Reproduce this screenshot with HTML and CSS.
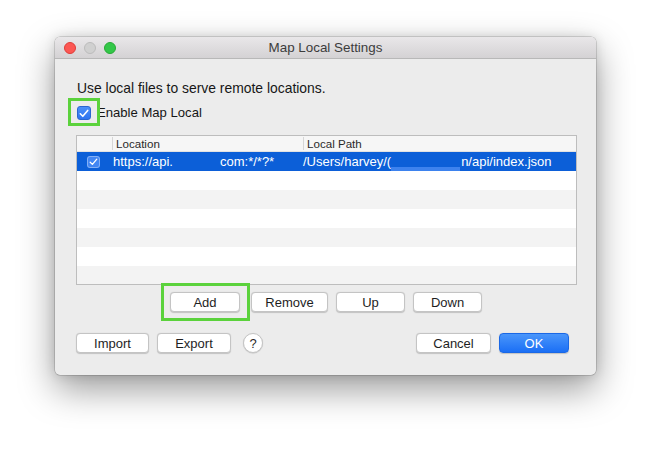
FILE: index.html
```
<!DOCTYPE html>
<html>
<head>
<meta charset="utf-8">
<link rel="stylesheet" href="styles.css">
</head>
<body>
<div class="window">
  <div class="titlebar">
    <div class="lights">
      <span class="light red"></span>
      <span class="light gray"></span>
      <span class="light green"></span>
    </div>
    <div class="title">Map Local Settings</div>
  </div>
  <div class="content">
    <div class="desc">Use local files to serve remote locations.</div>
    <div class="check-row">
      <span class="checkbox">
        <svg width="10" height="9" viewBox="0 0 10 9"><path d="M1.3 4.8 L3.8 7.3 L8.7 1.4" fill="none" stroke="#fff" stroke-width="1.6" stroke-linecap="round" stroke-linejoin="round"/></svg>
      </span>
      <span class="check-label">Enable Map Local</span>
    </div>
    <div class="table">
      <div class="thead">
        <div class="c1"></div>
        <div class="c2 th">Location</div>
        <div class="c3 th">Local Path</div>
      </div>
      <div class="tbody">
        <div class="row selected">
          <div class="c1"><span class="rowcheck"><svg width="9" height="8" viewBox="0 0 9 8"><path d="M1.2 4.2 L3.4 6.4 L7.8 1.2" fill="none" stroke="#fff" stroke-width="1.3" stroke-linecap="round" stroke-linejoin="round"/></svg></span></div>
          <div class="c2 td"><span>https://api.</span><span class="gap1"></span><span>com:*/*?*</span></div>
          <div class="c3 td"><span>/Users/harvey/(</span><span class="redact"></span><span>n/api/index.json</span></div>
        </div>
        <div class="row"></div>
        <div class="row alt"></div>
        <div class="row"></div>
        <div class="row alt"></div>
        <div class="row"></div>
        <div class="row alt"></div>
      </div>
    </div>
    <div class="btn-row">
      <button class="btn w-add">Add</button>
      <button class="btn w-remove">Remove</button>
      <button class="btn w-up">Up</button>
      <button class="btn w-down">Down</button>
    </div>
    <div class="bottom-row">
      <button class="btn w-import">Import</button>
      <button class="btn w-export">Export</button>
      <span class="help">?</span>
      <span class="spacer"></span>
      <button class="btn w-cancel">Cancel</button>
      <button class="btn primary w-ok">OK</button>
    </div>
  </div>
  <div class="hl hl-check"></div>
  <div class="hl hl-add"></div>
</div>
</body>
</html>
```
FILE: styles.css
```
* { box-sizing: border-box; }
html, body { margin: 0; padding: 0; background: #fff; }
body {
  width: 652px; height: 449px; overflow: hidden;
  font-family: "Liberation Sans", Arial, sans-serif;
  color: #161616;
}
.window {
  position: relative;
  margin: 37px 0 0 55px;
  width: 541px; height: 338px;
  background: #ececec;
  border-radius: 5px;
  box-shadow: 0 0 0 0.5px rgba(0,0,0,0.25), 0 14px 36px rgba(0,0,0,0.4), 0 0 12px rgba(0,0,0,0.12);
}
.titlebar {
  height: 22px;
  display: flex; align-items: center; justify-content: center;
  position: relative;
  background: linear-gradient(#e9e7e9, #d4d2d4);
  border-bottom: 1px solid #b8b8b8;
  border-radius: 5px 5px 0 0;
}
.lights {
  position: absolute; left: 9px; top: 5px;
  display: flex; gap: 8px;
}
.light { width: 12px; height: 12px; border-radius: 50%; display: block; }
.red { background: #fc5753; border: 0.5px solid #df3d39; }
.gray { background: #d0d0d0; border: 0.5px solid #bcbcbc; }
.green { background: #33c748; border: 0.5px solid #27aa35; }
.title { font-size: 13.4px; color: #3c3c3c; }
.content { padding: 0 19px 0 21px; }
.desc {
  margin-top: 21px; height: 16px; line-height: 16px;
  font-size: 13.9px; padding-left: 1px;
}
.check-row {
  margin-top: 9px; height: 16px;
  display: flex; align-items: center;
}
.checkbox {
  width: 14px; height: 14px; border-radius: 3px;
  background: linear-gradient(#4a8ff9, #2f74ef);
  border: 0.5px solid #2a66d0;
  display: flex; align-items: center; justify-content: center;
  margin-left: 1px;
}
.check-label { margin-left: 6px; font-size: 13.1px; line-height: 16px; }
.table {
  margin-top: 14px;
  width: 501px; height: 150px;
  border: 1px solid #bdbdbd;
  background: #fff;
  overflow: hidden;
}
.thead {
  height: 16px; display: flex;
  background: #f6f6f6;
  border-bottom: 1px solid #e2e2e2;
}
.c1 { width: 35px; flex: none; }
.c2 { width: 191px; flex: none; }
.c3 { flex: 1; }
.th {
  border-left: 1px solid #d6d6d6;
  font-size: 11.6px; padding-left: 3px; color: #2a2a2a;
  margin: 1px 0;
  height: 13px; line-height: 13px;
}
.row { height: 19px; display: flex; background: #fff; }
.row.alt { background: #f3f3f3; }
.row.selected { background: #0c5fd8; color: #fff; }
.row .c1 { display: flex; align-items: center; padding-left: 10px; }
.rowcheck {
  width: 13px; height: 12px; border-radius: 3px;
  background: #4286f3;
  border: 0.5px solid rgba(255,255,255,0.35);
  display: flex; align-items: center; justify-content: center;
}
.td { font-size: 13px; line-height: 19px; display: flex; white-space: nowrap; }
.c2.td { padding-left: 1px; }
.gap1 { width: 47px; flex: none; }
.redact { width: 70px; height: 19px; flex: none; position: relative; }
.redact::after {
  content: ""; position: absolute; left: 0; right: 1px; bottom: 0; height: 4px;
  background: #3d82ee;
}
.btn-row {
  margin-top: 7px; height: 20px;
  display: flex; gap: 8px; padding-left: 94px;
}
.bottom-row {
  margin-top: 21px; height: 20px;
  display: flex; gap: 8px; align-items: center;
  padding-right: 8px;
}
.btn {
  height: 20px; padding: 0;
  font-family: "Liberation Sans", Arial, sans-serif;
  font-size: 13px; color: #1e1e1e;
  background: #fff;
  border: 0.5px solid #c4c4c4;
  border-radius: 4px;
  box-shadow: 0 0.5px 1px rgba(0,0,0,0.18);
}
.w-add { width: 70px; }
.w-remove { width: 77px; margin-left: 3px; }
.w-up { width: 69px; }
.w-down { width: 69px; }
.w-import { width: 73px; }
.w-export { width: 74px; }
.w-cancel { width: 75px; }
.w-ok { width: 70px; }
.primary {
  background: linear-gradient(#4a96fb, #1b6ff5);
  border-color: #1a68e6;
  color: #fff;
}
.help {
  width: 20px; height: 20px; border-radius: 50%;
  background: #fff; border: 0.5px solid #c4c4c4;
  box-shadow: 0 0.5px 1px rgba(0,0,0,0.18);
  display: flex; align-items: center; justify-content: center;
  font-size: 13px; color: #2a2a2a; margin-left: 4px;
}
.spacer { flex: 1; }
.hl { position: absolute; border: 3px solid #5bd23c; pointer-events: none; }
.hl-check { left: 13px; top: 61px; width: 32px; height: 28px; }
.hl-add { left: 106px; top: 246px; width: 89px; height: 38px; }
```
